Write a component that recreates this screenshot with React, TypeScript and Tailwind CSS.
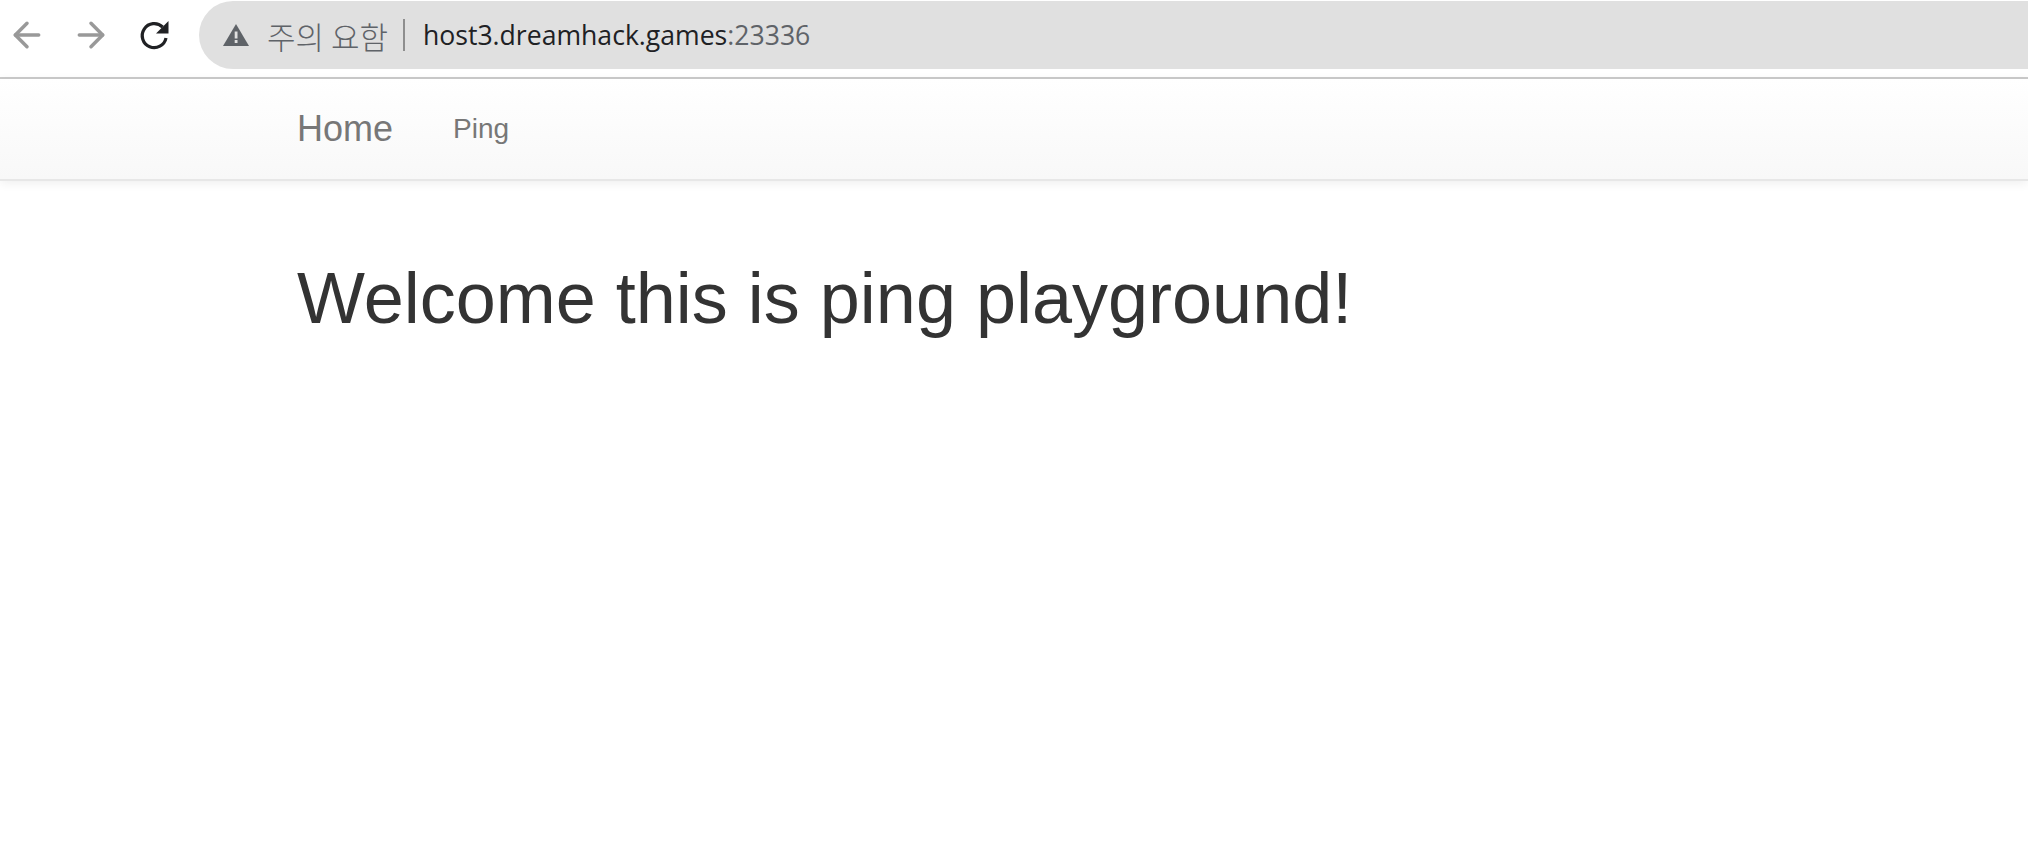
import { ArrowLeft, ArrowRight } from 'lucide-react';

export default function App() {
  return (
    <div className="h-[868px] overflow-hidden bg-white font-['Liberation_Sans',sans-serif]">
      {/* Browser toolbar */}
      <div className="flex h-[77px] items-start bg-white pt-px">
        <div className="flex h-[68px] w-[199px] shrink-0 items-center">
          <ArrowLeft className="ml-[7px] h-[40px] w-[40px] text-[#999999]" strokeWidth={2.1} />
          <ArrowRight className="ml-[24px] h-[40px] w-[40px] text-[#999999]" strokeWidth={2.1} />
          <svg className="ml-[28px] h-[32px] w-[32px]" viewBox="0 0 32 32" fill="none">
            <path d="M27 19a12 12 0 1 1-3.4-11" stroke="#202124" strokeWidth="3.2" />
            <path d="M29.5 2v12.500H17z" fill="#202124" />
          </svg>
        </div>
        <div className="flex h-[68px] flex-1 items-center rounded-l-[34px] bg-[#e0e0e0] pl-[24px]">
          <svg className="h-[26px] w-[26px] shrink-0" viewBox="0 0 26 26">
            <path d="M13 2 26 24H0z" fill="#5f6368" />
            <rect x="11.700" y="9.500" width="2.800" height="7" fill="#e0e0e0" />
            <rect x="11.700" y="18" width="2.800" height="3" fill="#e0e0e0" />
          </svg>
          <span className="ml-[18px] font-['Noto_Sans_CJK_KR',sans-serif] text-[31px] leading-none font-light text-[#5f6368]">
            주의 요함
          </span>
          <div className="ml-[15px] h-[32px] w-[2px] bg-[#8e8e8e]" />
          <span className="ml-[18px] font-['Open_Sans',sans-serif] text-[26.6px] leading-none text-[#202124]">
            host3.dreamhack.games<span className="text-[#5f6368]">:23336</span>
          </span>
        </div>
      </div>

      <div className="h-[2px] bg-[#cbcbcb]" />

      {/* Navbar */}
      <nav className="flex h-[102px] items-center border-b-2 border-[#e7e7e7] bg-gradient-to-b from-white to-[#f8f8f8] pl-[297px] shadow-[0_2px_10px_rgba(0,0,0,0.07)]">
        <a className="text-[36px] text-[#777777]">Home</a>
        <a className="ml-[60px] text-[28px] text-[#777777]">Ping</a>
      </nav>

      {/* Page content */}
      <h1 className="mt-[78px] pl-[297px] text-[72px] leading-[1.1] font-normal text-[#333333]">
        Welcome this is ping playground!
      </h1>
    </div>
  );
}
